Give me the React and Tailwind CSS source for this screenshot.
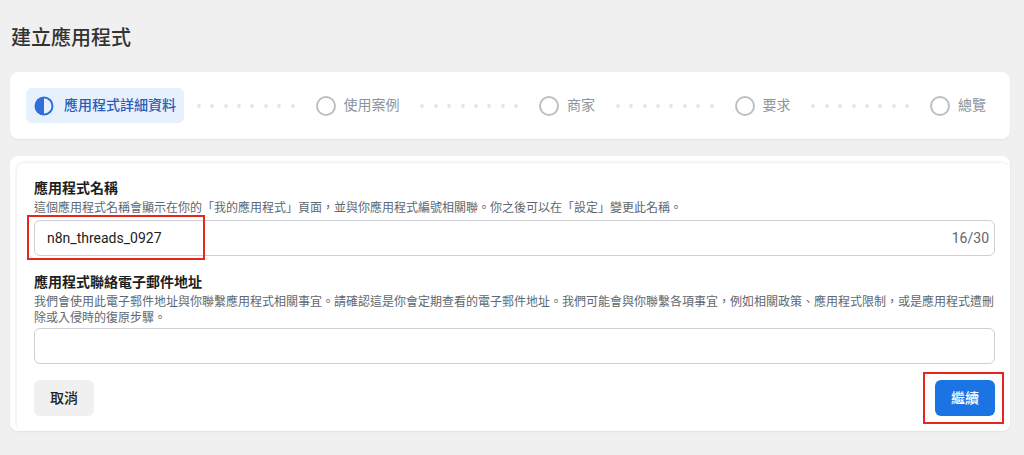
const font = { fontFamily: 'Roboto, "Noto Sans CJK TC", "Noto Sans", sans-serif' }

function Dots() {
  return (
    <div className="flex flex-1 items-center justify-around px-2">
      {Array.from({ length: 8 }).map((_, i) => (
        <span key={i} className="h-[4px] w-[4px] rounded-full bg-[#e4e6eb]" />
      ))}
    </div>
  )
}

function Step({ label }) {
  return (
    <div className="flex items-center gap-[8px] px-[8px]">
      <span className="h-[20px] w-[20px] rounded-full border-2 border-[#bcc0c4]" />
      <span className="text-[14px] text-[#8d949e]">{label}</span>
    </div>
  )
}

export default function App() {
  return (
    <div
      className="min-h-[455px] w-[1024px] bg-[#f0f0f0] pt-[26px] text-[#1c1e21]"
      style={font}
    >
      <h1 className="px-[11px] text-[20px] font-medium leading-[24px] text-[#333]">建立應用程式</h1>

      {/* Stepper */}
      <div className="ml-[10px] mr-[14px] mt-[22px] flex h-[67px] items-center rounded-lg bg-white px-[16px] shadow-[0_1px_2px_rgba(0,0,0,0.06)]">
        <div className="flex h-[35px] items-center gap-[10px] rounded-md bg-[#e7f0fd] px-[8px]">
          <svg width="20" height="20" viewBox="0 0 20 20">
            <circle cx="10" cy="10" r="8.5" fill="none" stroke="#2f6fdb" strokeWidth="2" />
            <path d="M10 1.5 A8.5 8.5 0 0 0 10 18.5 Z" fill="#2f6fdb" />
          </svg>
          <span className="text-[14px] font-medium text-[#2a5eb8]">應用程式詳細資料</span>
        </div>
        <Dots />
        <Step label="使用案例" />
        <Dots />
        <Step label="商家" />
        <Dots />
        <Step label="要求" />
        <Dots />
        <Step label="總覽" />
      </div>

      {/* Form */}
      <div className="ml-[10px] mr-[14px] mt-[17px] rounded-lg bg-white pl-[7px] pt-[7px] shadow-[0_1px_2px_rgba(0,0,0,0.06)]">
        <div className="rounded-lg bg-white pb-[15px] pl-[17px] pr-[15px] pt-[16px] shadow-[-1px_-1px_3px_rgba(0,0,0,0.08)]">
          <div className="text-[14px] font-semibold leading-[18px]">應用程式名稱</div>
          <div className="mt-[3px] text-[12px] leading-[16px] text-[#606770]">
            這個應用程式名稱會顯示在你的「我的應用程式」頁面，並與你應用程式編號相關聯。你之後可以在「設定」變更此名稱。
          </div>
          <div className="relative mt-[4px]">
            <div className="flex h-[36px] items-center justify-between rounded-md border border-[#ccd0d5] pl-[12px] pr-[5px]">
              <span className="text-[14px] text-[#1c1e21]">n8n_threads_0927</span>
              <span className="text-[14px] text-[#606770]">16/30</span>
            </div>
            <div className="pointer-events-none absolute left-[-7px] top-[-5px] h-[45px] w-[178px] border-2 border-[#e8251f]" />
          </div>

          <div className="mt-[17px] text-[14px] font-semibold leading-[18px]">應用程式聯絡電子郵件地址</div>
          <div className="mt-[3px] text-[12px] leading-[16px] text-[#606770]">
            我們會使用此電子郵件地址與你聯繫應用程式相關事宜。請確認這是你會定期查看的電子郵件地址。我們可能會與你聯繫各項事宜，例如相關政策、應用程式限制，或是應用程式遭刪除或入侵時的復原步驟。
          </div>
          <div className="mt-[2px] h-[36px] rounded-md border border-[#ccd0d5]" />

          <div className="mt-[16px] flex items-center justify-between">
            <button className="h-[36px] rounded-md bg-[#f0f0f0] px-[16px] text-[14px] font-medium text-[#1c1e21]">
              取消
            </button>
            <div className="relative">
              <button className="h-[36px] rounded-md bg-[#1b74e4] px-[16px] text-[14px] font-medium text-white">
                繼續
              </button>
              <div className="pointer-events-none absolute left-[-12px] top-[-8px] h-[52px] w-[81px] border-2 border-[#e8251f]" />
            </div>
          </div>
        </div>
      </div>
    </div>
  )
}
